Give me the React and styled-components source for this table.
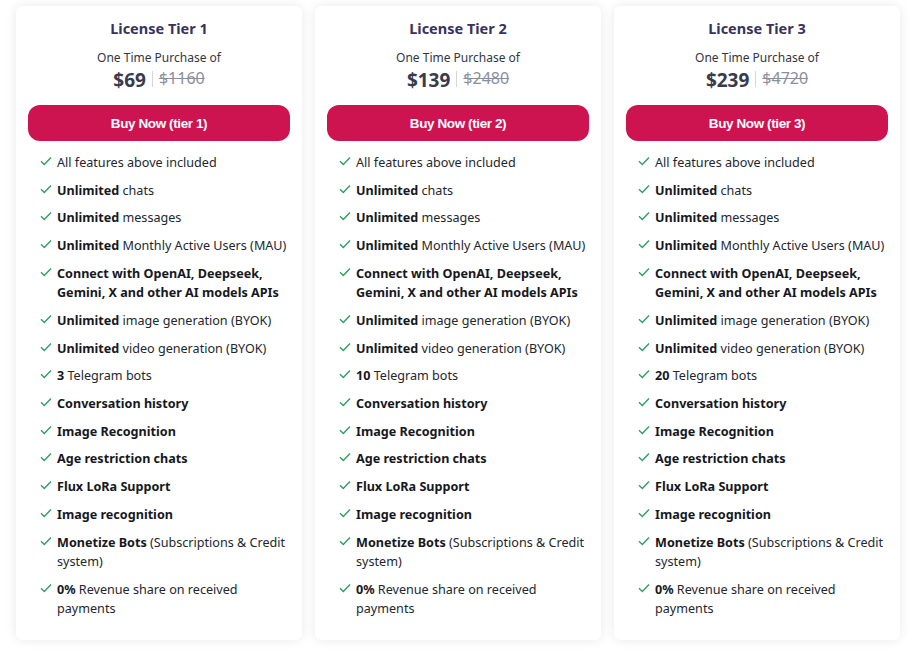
import styled, { createGlobalStyle } from "styled-components";

const GlobalStyle = createGlobalStyle`
  body {
    margin: 0;
    background: #ffffff;
    font-family: "Noto Sans", "Open Sans", sans-serif;
  }
`;

const tiers = [
  { n: 1, price: "$69", old: "$1160", bots: "3" },
  { n: 2, price: "$139", old: "$2480", bots: "10" },
  { n: 3, price: "$239", old: "$4720", bots: "20" },
];

const features = (bots) => [
  [null, "All features above included"],
  ["Unlimited", " chats"],
  ["Unlimited", " messages"],
  ["Unlimited", " Monthly Active Users (MAU)"],
  ["Connect with OpenAI, Deepseek, Gemini, X and other AI models APIs", ""],
  ["Unlimited", " image generation (BYOK)"],
  ["Unlimited", " video generation (BYOK)"],
  [bots, " Telegram bots"],
  ["Conversation history", ""],
  ["Image Recognition", ""],
  ["Age restriction chats", ""],
  ["Flux LoRa Support", ""],
  ["Image recognition", ""],
  ["Monetize Bots", " (Subscriptions & Credit system)"],
  ["0%", " Revenue share on received payments"],
];

function Check() {
  return (
    <CheckIcon viewBox="0 0 12 10" width="12" height="10">
      <path d="M1 5.2 L4.3 8.4 L11 1.4" fill="none" stroke="#2f9e62" strokeWidth="1.4" />
    </CheckIcon>
  );
}

function App() {
  return (
    <Page>
      <GlobalStyle />
      <Grid>
        {tiers.map((t) => (
          <Card key={t.n}>
            <Title>License Tier {t.n}</Title>
            <Sub>One Time Purchase of</Sub>
            <PriceRow>
              <Price>{t.price}</Price>
              <Divider />
              <OldPrice>{t.old}</OldPrice>
            </PriceRow>
            <BuyButton>Buy Now (tier {t.n})</BuyButton>
            <List>
              {features(t.bots).map(([b, rest], i) => (
                <Item key={i}>
                  <Check />
                  <span>
                    {b && <strong>{b}</strong>}
                    {rest}
                  </span>
                </Item>
              ))}
            </List>
          </Card>
        ))}
      </Grid>
    </Page>
  );
}

const Page = styled.div`
  padding: 6px 14px 21px 16px;
`;

const Grid = styled.div`
  display: grid;
  grid-template-columns: repeat(3, 286px);
  gap: 13px;
`;

const Card = styled.div`
  background: #fff;
  border-radius: 6px;
  box-shadow: 0 0 12px rgba(0, 0, 0, 0.09);
  padding: 12px 12px 20px;
  display: flex;
  flex-direction: column;
  align-items: center;
  height: 634px;
  box-sizing: border-box;
  & > * {
    flex: none;
  }
`;

const Title = styled.div`
  font-size: 14.5px;
  font-weight: 700;
  color: #38335c;
  line-height: 20px;
`;

const Sub = styled.div`
  margin-top: 12px;
  font-size: 12px;
  color: #33363f;
  line-height: 16px;
`;

const PriceRow = styled.div`
  display: flex;
  align-items: center;
  gap: 6px;
  margin-top: 1px;
`;

const Price = styled.span`
  font-size: 19px;
  font-weight: 700;
  color: #373b4b;
  line-height: 26px;
`;

const Divider = styled.span`
  width: 1px;
  height: 16px;
  background: #d4d6db;
  margin-top: -2px;
`;

const OldPrice = styled.span`
  font-size: 16px;
  color: #8a8f9c;
  text-decoration: line-through;
  margin-top: -4px;
`;

const BuyButton = styled.button`
  margin-top: 12px;
  width: 100%;
  height: 36px;
  border: none;
  border-radius: 12px;
  background: #cd1350;
  color: #fff;
  font-family: "Liberation Sans", Arial, sans-serif;
  font-weight: 700;
  font-size: 13.5px;
  letter-spacing: -0.4px;
  cursor: pointer;
`;

const List = styled.ul`
  list-style: none;
  margin: 12px -6px 0 0;
  padding: 0 0 0 12px;
  align-self: stretch;
  display: flex;
  flex-direction: column;
  gap: 8.1px;
`;

const Item = styled.li`
  display: flex;
  align-items: flex-start;
  gap: 5px;
  font-size: 12.6px;
  line-height: 19.6px;
  color: #23262d;
  strong {
    font-weight: 700;
    color: #16181d;
  }
`;

const CheckIcon = styled.svg`
  flex: none;
  margin-top: 3px;
`;

export default App;
